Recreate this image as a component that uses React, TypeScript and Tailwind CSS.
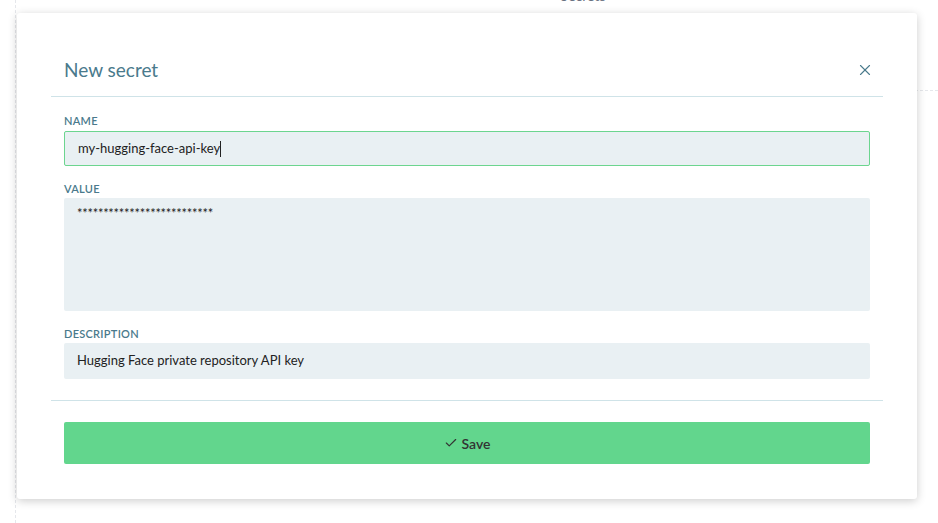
import { Check, X } from 'lucide-react';

const label = 'text-[11px] font-semibold uppercase tracking-wide text-[#4a7a8c] leading-none';
const field = 'w-full bg-[#e9f0f3] rounded-[2px] px-[13px] text-[13px] text-[#222] outline-none';

export default function App() {
  return (
    <div className="relative w-[938px] h-[523px] bg-white overflow-hidden" style={{ fontFamily: 'Lato, "Open Sans", sans-serif' }}>
      {/* background page */}
      <div className="absolute left-[15px] top-0 h-full border-l border-dashed border-gray-200" />
      <div className="absolute left-[900px] right-0 top-[90px] border-t border-dashed border-gray-200" />
      <div className="absolute left-[545px] top-[-14px] text-[14px] leading-[20px] text-gray-500">✓ Secrets</div>

      <div className="absolute left-[17px] top-[13px] w-[900px] h-[486px] bg-white rounded-[3px] shadow-[0_2px_10px_rgba(0,0,0,0.2)] px-[34px] pt-[44px]">
        <div className="flex items-center justify-between px-[13px] pb-[13px] border-b border-[#cfe3e8]">
          <h2 className="text-[19px] text-[#4a7a8c] leading-[26px]">New secret</h2>
          <X size={18} strokeWidth={1.5} className="text-[#4a7a8c] mr-[-4px]" />
        </div>
        <div className="px-[13px] pt-[18px] pb-[21px] border-b border-[#cfe3e8] flex flex-col">
          <span className={label}>Name</span>
          <div className={`${field} mt-[5px] h-[35px] flex items-center border border-[#6cd58f]`}>
            my-hugging-face-api-key<span className="w-px h-[16px] bg-[#222]" />
          </div>
          <span className={`${label} mt-[17px]`}>Value</span>
          <div className={`${field} mt-[4px] h-[113px] pt-[6px] text-[10px] tracking-[-0.3px]`}>**************************</div>
          <span className={`${label} mt-[17px]`}>Description</span>
          <div className={`${field} mt-[4px] h-[36px] flex items-center`}>Hugging Face private repository API key</div>
        </div>
        <div className="px-[13px] pt-[21px]">
          <button className="w-full h-[42px] bg-[#62d68d] rounded-[2px] flex items-center justify-center gap-[4px] text-[14px] font-semibold text-[#333]">
            <Check size={14} strokeWidth={2} /> Save
          </button>
        </div>
      </div>
    </div>
  );
}
